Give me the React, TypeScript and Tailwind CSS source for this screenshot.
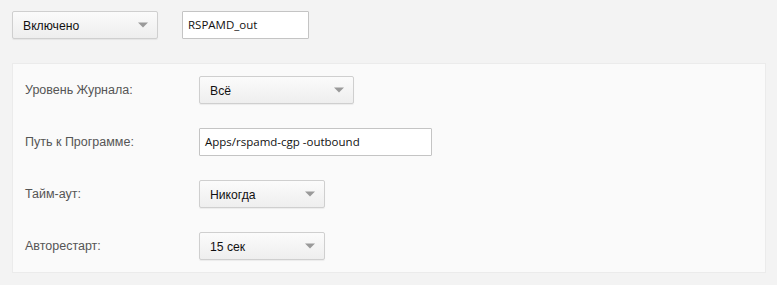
import React from 'react';

const Arrow = () => (
  <span className="absolute right-[9px] top-1/2 -translate-y-1/2 w-0 h-0 border-l-[5px] border-r-[5px] border-t-[5px] border-l-transparent border-r-transparent border-t-[#9a9a9a]" />
);

const SelectBox = ({ value, width }: { value: string; width: string }) => (
  <div
    className={`relative ${width} h-[28px] flex items-center pl-[10px] pt-[2px] rounded-[2px] border border-[#cfcfcf] bg-gradient-to-b from-[#fbfbfb] to-[#eeeeee] shadow-[0_1px_1px_rgba(0,0,0,0.06)] text-[12.2px] text-[#111] font-['Liberation_Sans',Arial,sans-serif]`}
  >
    {value}
    <Arrow />
  </div>
);

const TextBox = ({ value, width }: { value: string; width: string }) => (
  <div
    className={`${width} h-[28px] flex items-center pl-[5px] bg-white border border-[#c4c4c4] rounded-[1px] text-[11.5px] text-[#111] font-['Open_Sans',sans-serif]`}
  >
    {value}
  </div>
);

const rows = [
  { label: 'Уровень Журнала:', field: <SelectBox value="Всё" width="w-[155px]" /> },
  { label: 'Путь к Программе:', field: <TextBox value="Apps/rspamd-cgp -outbound" width="w-[233px]" /> },
  { label: 'Тайм-аут:', field: <SelectBox value="Никогда" width="w-[126px]" /> },
  { label: 'Авторестарт:', field: <SelectBox value="15 сек" width="w-[126px]" /> },
];

export default function App() {
  return (
    <div className="w-[777px] h-[285px] bg-[#f3f3f3] pt-[11px] pl-[12px] pr-[11px] overflow-hidden">
      <div className="flex items-center gap-[24px]">
        <SelectBox value="Включено" width="w-[146px]" />
        <TextBox value="RSPAMD_out" width="w-[127px]" />
      </div>

      <div className="mt-[24px] bg-[#fafafa] border border-[#ebebeb]">
        {rows.map((row) => (
          <div key={row.label} className="h-[52px] flex items-center pl-[12px]">
            <div className="w-[174px] text-[12.5px] text-[#555] font-['Liberation_Sans',Arial,sans-serif]">
              {row.label}
            </div>
            {row.field}
          </div>
        ))}
      </div>
    </div>
  );
}
